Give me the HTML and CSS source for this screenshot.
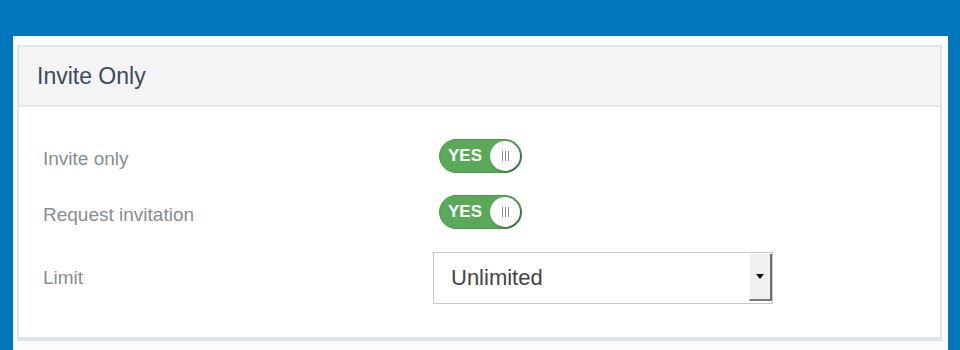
FILE: index.html
```html
<!DOCTYPE html>
<html lang="en">
<head>
	<meta charset="UTF-8">
	<title>Invite Only</title>
	<link rel="stylesheet" href="styles.css">
</head>
<body>
	<div id="Page">
		<div class="Card">
			<div class="CardHead">Invite Only</div>
			<div class="CardBody">
				<div class="Row">
					<div class="Label">Invite only</div>
					<div class="Switch"><span class="SwitchText">YES</span><span class="Knob"><i></i><i></i><i></i></span></div>
				</div>
				<div class="Row">
					<div class="Label">Request invitation</div>
					<div class="Switch"><span class="SwitchText">YES</span><span class="Knob"><i></i><i></i><i></i></span></div>
				</div>
				<div class="Row RowSelect">
					<div class="Label">Limit</div>
					<div class="Select">
						<span class="SelectText">Unlimited</span>
						<span class="SelectBtn"><span class="Caret"></span></span>
					</div>
				</div>
			</div>
		</div>
	</div>
</body>
</html>
```

FILE: styles.css
```css
html,body{
	margin: 0;padding: 0;
}
body{
	background: #0077bb;
	font-family: "Liberation Sans", Arial, sans-serif;
	height: 350px;overflow: hidden;
}
#Page{
	margin: 36px 12px 0 13px;
	padding: 9px 6px 0 4px;
	background: #fbfbfb;
	height: 305px;
}
.Card{
	border: 2px solid #dfe4e7;border-bottom-width: 4px;
	background: #fff;
}
.CardHead{
	height: 58px;line-height: 59px;
	padding-left: 18px;
	background: #f4f4f4;
	border-bottom: 2px solid #e6e9eb;
	font-size: 23px;color: #3b4a5c;
}
.CardBody{
	padding: 32px 0 33px 24px;
	display: flex;flex-direction: column;gap: 22px;
}
.Row{
	display: grid;grid-template-columns: 390px auto;align-items: center;
	height: 34px;
}
.RowSelect{
	height: 52px;margin-top: 1px;
}
.Label{
	font-size: 19px;color: #858e91;padding-top: 5px;
}
.RowSelect .Label{
	padding-top: 0;
}
.Switch{
	margin-left: 6px;
	width: 83px;height: 34px;box-sizing: border-box;
	border-radius: 17px;
	background: #5aa95a;
	border: 1px solid #4f9a4f;
	display: flex;align-items: center;justify-content: space-between;
	padding: 0 1px 0 8px;
}
.SwitchText{
	color: #fff;font-weight: bold;font-size: 17px;
	padding-bottom: 1px;
}
.Knob{
	width: 30px;height: 30px;border-radius: 50%;
	background: #fff;
	box-shadow: 1px 1px 2px rgba(0,0,0,0.45);
	display: flex;align-items: center;justify-content: center;gap: 2px;
}
.Knob i{
	display: block;width: 1px;height: 10px;background: #8a8a8a;
}
.Select{
	width: 340px;height: 52px;box-sizing: border-box;
	border: 1px solid #c9c9c9;background: #fff;
	display: flex;align-items: center;justify-content: space-between;
}
.SelectText{
	padding-left: 17px;font-size: 22px;color: #444;
}
.SelectBtn{
	align-self: stretch;
	width: 23px;box-sizing: border-box;
	margin: 1px 0 2px;
	background: #f0f0f0;
	border-right: 2px solid #6e6e6e;border-bottom: 2px solid #7a7a7a;
	border-left: 1px solid #fafafa;
	display: flex;align-items: center;justify-content: center;
}
.Caret{
	width: 0;height: 0;
	border-left: 4px solid transparent;border-right: 4px solid transparent;
	border-top: 5px solid #111;
}
```
